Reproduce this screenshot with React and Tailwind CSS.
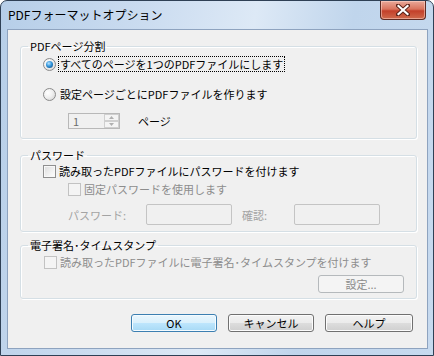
function Radio({ checked }) {
  return (
    <div className="w-[13px] h-[13px] shrink-0 rounded-full border border-[#8a8a8a] bg-[radial-gradient(circle_at_35%_35%,#ffffff_0%,#f0f0f0_45%,#cfcfcf_100%)] flex items-center justify-center">
      {checked && (
        <div className="w-[7px] h-[7px] rounded-full bg-[radial-gradient(circle_at_40%_35%,#b9e4ff_0%,#3396dc_45%,#0b3f70_100%)]" />
      )}
    </div>
  );
}

function Check({ disabled = false }) {
  return (
    <div
      className={
        disabled
          ? "w-[13px] h-[13px] shrink-0 border border-[#c2c2c2] bg-[#f4f4f4]"
          : "w-[13px] h-[13px] shrink-0 border border-[#8f8f8f] bg-[linear-gradient(135deg,#dcdcdc_0%,#f2f2f2_60%,#ffffff_100%)] shadow-[inset_0_0_0_1px_#f8f8f8]"
      }
    />
  );
}

function Group({ title, children }) {
  return (
    <fieldset className="border border-[#d5dfe5] rounded-[3px] shadow-[inset_1px_1px_0_#ffffff,1px_1px_0_#ffffff]">
      <legend className="ml-[7px] px-[2px] text-[11px] leading-[14px] text-black">
        {title}
      </legend>
      {children}
    </fieldset>
  );
}

function Button({ label, primary = false, disabled = false, className = "" }) {
  const look = disabled
    ? "border-[#b5b9bc] bg-[#f4f4f4] text-[#8a8a8a]"
    : primary
    ? "border-[#3c7fb1] bg-[linear-gradient(#eaf6fd_0%,#d9f0fc_50%,#bee6fd_50%,#a7d9f5_100%)] shadow-[inset_0_0_0_1px_#f4fbff] text-black"
    : "border-[#707070] bg-[linear-gradient(#f2f2f2_0%,#ebebeb_50%,#dddddd_50%,#cfcfcf_100%)] shadow-[inset_0_0_0_1px_#fcfcfc] text-black";
  return (
    <div
      className={`h-[18px] border rounded-[3px] flex items-center justify-center text-[11px] leading-none ${look} ${className}`}
    >
      {label}
    </div>
  );
}

export default function App() {
  return (
    <div className="w-[434px] h-[356px] flex flex-col border border-[#2f4055] rounded-t-[7px] overflow-hidden bg-[linear-gradient(100deg,#b6cee8_0%,#cbdcf0_30%,#dde9f6_52%,#c0d5ec_72%,#c7daef_100%)] font-['Noto_Sans_CJK_JP','Noto_Sans',sans-serif]">
      {/* title bar */}
      <div className="h-[28px] flex items-start shrink-0">
        <div className="pl-[7px] pt-[6px] text-[12px] leading-[16px] text-black">
          PDFフォーマットオプション
        </div>
        <div className="ml-auto mr-[7px] w-[46px] h-[19px] rounded-b-[4px] border border-t-0 border-[#5e2a22] bg-[linear-gradient(#e9a99a_0%,#d9735d_45%,#c3402a_55%,#cf6a4c_100%)] shadow-[inset_0_0_0_1px_rgba(255,220,210,0.5)] flex items-center justify-center">
          <svg width="14" height="12" viewBox="0 0 14 12">
            <path d="M2 1.5 L12 10.5 M12 1.5 L2 10.5" stroke="#5a2218" strokeWidth="4" strokeLinecap="square" />
            <path d="M2.5 2 L11.5 10 M11.5 2 L2.5 10" stroke="#ffffff" strokeWidth="2.2" strokeLinecap="square" />
          </svg>
        </div>
      </div>

      {/* client area */}
      <div className="flex-1 ml-[6px] mr-[5px] mb-[6px] bg-[#f0f0f0] border border-[#8ea3bf] flex flex-col pl-[12px] pr-[10px] pt-[9px] text-[11px] leading-[14px] text-black">
        <Group title="PDFページ分割">
          <div className="flex flex-col pl-[22px] pb-[9px]">
            <div className="mt-[3px] h-[16px] flex items-center">
              <Radio checked />
              <div className="ml-[2px] h-[16px] px-[1px] border border-dotted border-black flex items-center">
                すべてのページを1つのPDFファイルにします
              </div>
            </div>
            <div className="mt-[14px] h-[16px] flex items-center gap-[4px]">
              <Radio />
              <span>設定ページごとにPDFファイルを作ります</span>
            </div>
            <div className="mt-[11px] h-[16px] flex items-center pl-[25px]">
              <div className="w-[52px] h-[16px] border border-[#b8b8b8] bg-[#f0f0f0] flex">
                <span className="flex-1 pl-[4px] text-[#6d6d6d] leading-[14px]">1</span>
                <div className="w-[15px] flex flex-col">
                  <div className="flex-1 border border-[#cfcfcf] bg-[#f4f4f4] flex items-center justify-center">
                    <svg width="5" height="3" viewBox="0 0 5 3">
                      <path d="M0 3 L2.5 0 L5 3 Z" fill="#b0b0b0" />
                    </svg>
                  </div>
                  <div className="flex-1 border border-[#cfcfcf] bg-[#f4f4f4] flex items-center justify-center">
                    <svg width="5" height="3" viewBox="0 0 5 3">
                      <path d="M0 0 L5 0 L2.5 3 Z" fill="#b0b0b0" />
                    </svg>
                  </div>
                </div>
              </div>
              <span className="ml-[18px]">ページ</span>
            </div>
          </div>
        </Group>

        <div className="mt-[9px]">
          <Group title="パスワード">
            <div className="flex flex-col pb-[6px]">
              <div className="mt-[2px] h-[14px] flex items-center gap-[3px] pl-[22px]">
                <Check />
                <span>読み取ったPDFファイルにパスワードを付けます</span>
              </div>
              <div className="mt-[4px] h-[14px] flex items-center gap-[3px] pl-[47px] text-[#8d8d8d]">
                <Check disabled />
                <span>固定パスワードを使用します</span>
              </div>
              <div className="mt-[8px] h-[21px] flex items-center pl-[47px] text-[#a3a3a3]">
                <span className="w-[78px]">パスワード:</span>
                <div className="w-[86px] h-[21px] border border-[#c4c4c4] rounded-[2px] bg-[#f0f0f0]" />
                <span className="ml-[10px] w-[52px]">確認:</span>
                <div className="w-[86px] h-[21px] border border-[#c4c4c4] rounded-[2px] bg-[#f0f0f0]" />
              </div>
            </div>
          </Group>
        </div>

        <div className="mt-[6px]">
          <Group title="電子署名･タイムスタンプ">
            <div className="flex flex-col pb-[5px]">
              <div className="mt-[3px] h-[14px] flex items-center gap-[3px] pl-[23px] text-[#8d8d8d]">
                <Check disabled />
                <span>読み取ったPDFファイルに電子署名･タイムスタンプを付けます</span>
              </div>
              <div className="mt-[6px] flex justify-end pr-[12px]">
                <Button label="設定..." disabled className="w-[86px]" />
              </div>
            </div>
          </Group>
        </div>

        <div className="mt-[15px] flex justify-end gap-[11px] pr-[4px]">
          <Button label="OK" primary className="w-[86px]" />
          <Button label="キャンセル" className="w-[86px]" />
          <Button label="ヘルプ" className="w-[88px]" />
        </div>
      </div>
    </div>
  );
}
